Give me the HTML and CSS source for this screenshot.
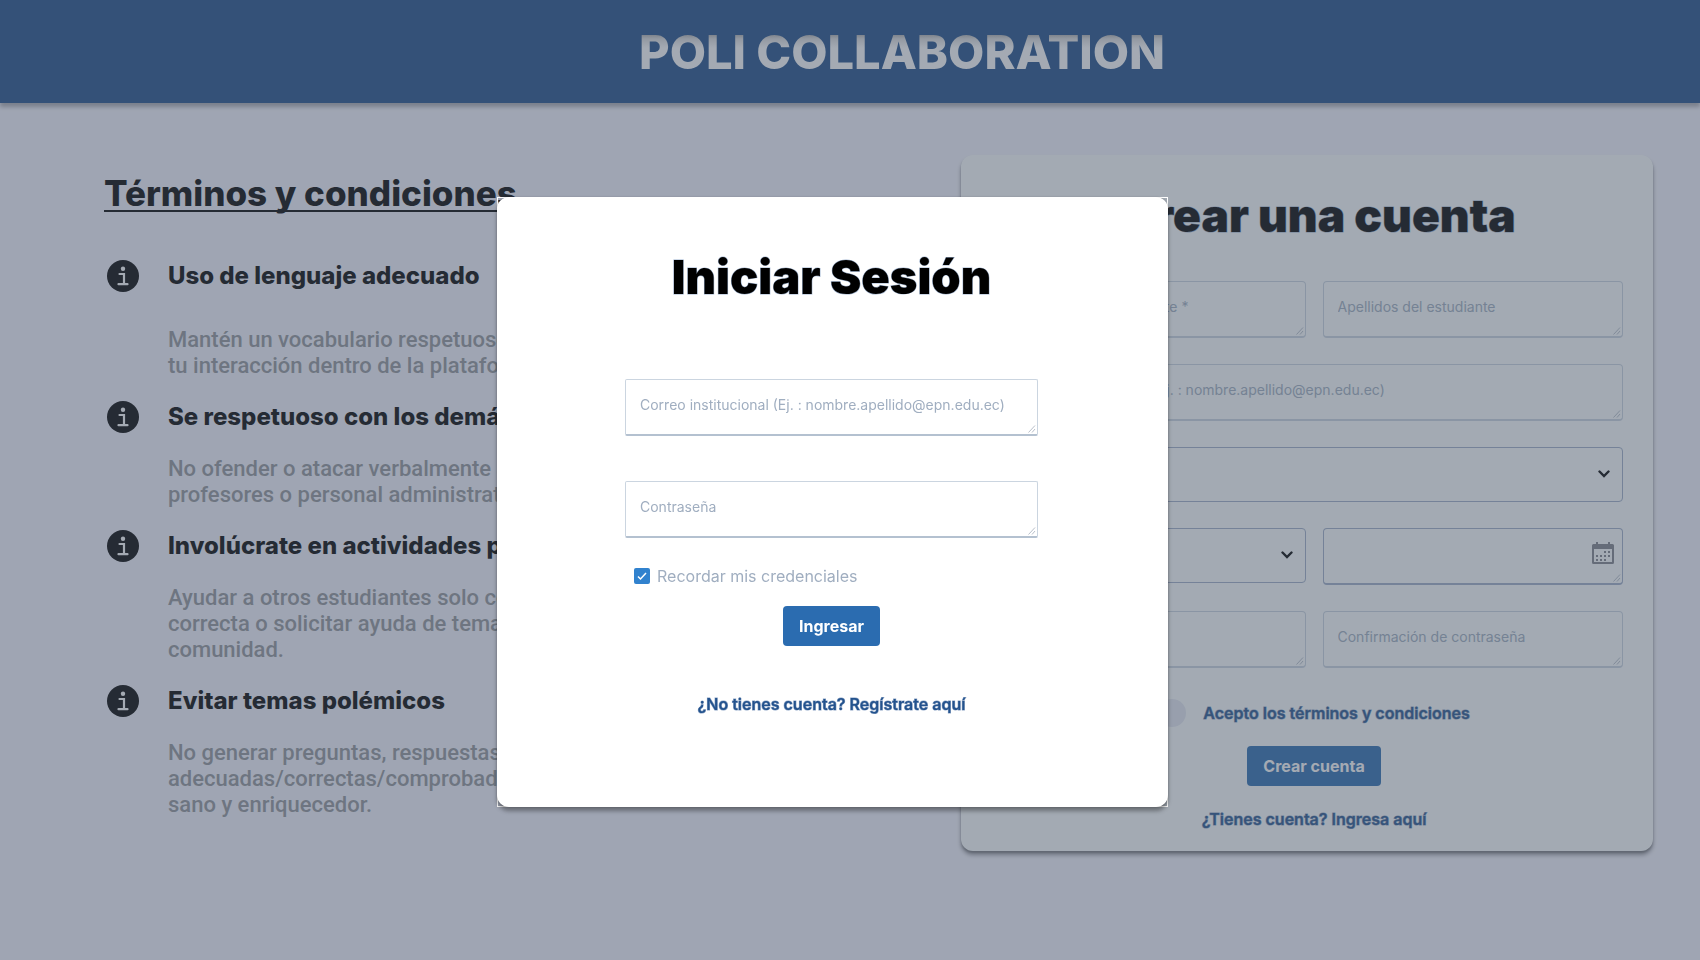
FILE: index.html
```html
<!DOCTYPE html>
<html lang="es">
<head>
<meta charset="utf-8">
<meta name="viewport" content="width=device-width, initial-scale=1">
<title>Poli Collaboration</title>
<link rel="stylesheet" href="styles.css">
</head>
<body>
<svg class="sprite" aria-hidden="true">
  <symbol id="info" viewBox="0 0 32 32">
    <circle cx="16" cy="16" r="16" fill="#000"/>
    <circle cx="16" cy="8.700" r="2.200" fill="#fff"/>
    <path d="M12.500 14h4.500v10M11.500 24.200h9" fill="none" stroke="#fff" stroke-width="2.200" stroke-linecap="round"/>
  </symbol>
  <symbol id="grip" viewBox="0 0 8 8">
    <path d="M.5 7.500l6.500-7M4 7.500l3-3.500" fill="none" stroke="currentColor" stroke-width="1"/>
  </symbol>
  <symbol id="chevron" viewBox="0 0 12 8">
    <path d="M1.500 1.500L6 6l4.500-4.500" fill="none" stroke="#000" stroke-width="2.400" stroke-linecap="round"/>
  </symbol>
  <symbol id="calendar" viewBox="0 0 22 22">
    <path d="M4 0h2v2h10V0h2v2h2.500q1.500 0 1.500 1.500V20.500q0 1.500-1.500 1.500H1.500Q0 22 0 20.500V3.500Q0 2 1.500 2H4zM2 7v13h18V7z" fill-rule="evenodd" fill="#80828a"/>
    <path d="M12 9h2v2h-2zM16 9h2v2h-2zM4 13h2v2H4zM8 13h2v2H8zM12 13h2v2h-2zM16 13h2v2h-2zM4 17h2v2H4zM8 17h2v2H8zM12 17h2v2h-2z" fill="#80828a"/>
  </symbol>
</svg>

<header class="topbar">
  <h1 class="brand">POLI COLLABORATION</h1>
</header>

<main class="page">
  <section class="terms">
    <h2 class="terms-title">Términos y condiciones</h2>
    <ul class="rules">
      <li class="rule rule-lead">
        <svg class="rule-icon"><use href="#info"/></svg>
        <h3 class="rule-name">Uso de lenguaje adecuado</h3>
        <p class="rule-text">Mantén un vocabulario respetuoso durante<br>tu interacción dentro de la plataforma.</p>
      </li>
      <li class="rule">
        <svg class="rule-icon"><use href="#info"/></svg>
        <h3 class="rule-name">Se respetuoso con los demás</h3>
        <p class="rule-text">No ofender o atacar verbalmente a otros,<br>profesores o personal administrativo.</p>
      </li>
      <li class="rule">
        <svg class="rule-icon"><use href="#info"/></svg>
        <h3 class="rule-name">Involúcrate en actividades positivas</h3>
        <p class="rule-text">Ayudar a otros estudiantes solo con información<br>correcta o solicitar ayuda de temas de la<br>comunidad.</p>
      </li>
      <li class="rule">
        <svg class="rule-icon"><use href="#info"/></svg>
        <h3 class="rule-name">Evitar temas polémicos</h3>
        <p class="rule-text">No generar preguntas, respuestas no<br>adecuadas/correctas/comprobadas en un espacio<br>sano y enriquecedor.</p>
      </li>
    </ul>
  </section>

  <form class="card signup" id="signup">
    <h2 class="card-title">Crear una cuenta</h2>
    <div class="signup-grid">
      <div class="field"><input class="control" type="text" placeholder="Nombres del estudiante *" aria-label="Nombres del estudiante"><svg class="grip"><use href="#grip"/></svg></div>
      <div class="field"><input class="control" type="text" placeholder="Apellidos del estudiante" aria-label="Apellidos del estudiante"><svg class="grip"><use href="#grip"/></svg></div>
      <div class="field wide"><input class="control" type="email" placeholder="Correo institucional (Ej. : nombre.apellido@epn.edu.ec)" aria-label="Correo institucional"><svg class="grip"><use href="#grip"/></svg></div>
      <div class="field wide strong"><select class="control select" aria-label="Carrera"><option></option></select><svg class="chevron"><use href="#chevron"/></svg></div>
      <div class="field strong"><select class="control select" aria-label="Género"><option></option></select><svg class="chevron"><use href="#chevron"/></svg></div>
      <div class="field strong"><input class="control" type="text" aria-label="Fecha de nacimiento"><svg class="calendar"><use href="#calendar"/></svg><svg class="grip"><use href="#grip"/></svg></div>
      <div class="field"><input class="control" type="password" placeholder="Contraseña" aria-label="Contraseña"><svg class="grip"><use href="#grip"/></svg></div>
      <div class="field"><input class="control" type="password" placeholder="Confirmación de contraseña" aria-label="Confirmación de contraseña"><svg class="grip"><use href="#grip"/></svg></div>
    </div>
    <div class="signup-actions">
      <label class="accept"><input class="toggle" type="checkbox"><span class="link">Acepto los términos y condiciones</span></label>
      <button class="button" type="button">Crear cuenta</button>
      <a class="link" href="#login">¿Tienes cuenta? Ingresa aquí</a>
    </div>
  </form>
</main>

<div class="overlay">
  <div class="modal" id="login" role="dialog" aria-modal="true" aria-labelledby="login-title">
    <form class="modal-body">
      <h2 class="modal-title" id="login-title">Iniciar Sesión</h2>
      <div class="modal-fields">
        <div class="field framed"><input class="control" type="email" placeholder="Correo institucional (Ej. : nombre.apellido@epn.edu.ec)" aria-label="Correo institucional"><svg class="grip"><use href="#grip"/></svg></div>
        <div class="field framed"><input class="control" type="password" placeholder="Contraseña" aria-label="Contraseña"><svg class="grip"><use href="#grip"/></svg></div>
      </div>
      <label class="remember">
        <span class="check"><input class="check-input" type="checkbox" checked><svg class="check-mark" viewBox="0 0 16 16"><path d="M4 8.500l2.500 2.500 5.500-6" fill="none" stroke="#fff" stroke-width="1.500"/></svg></span>
        Recordar mis credenciales
      </label>
      <button class="button" type="button">Ingresar</button>
      <a class="link modal-link" href="#signup">¿No tienes cuenta? Regístrate aquí</a>
    </form>
  </div>
</div>
</body>
</html>
```
FILE: styles.css
```css
* { box-sizing: border-box; }

body {
  margin: 0;
  min-height: 100vh;
  background: #f5f5fe;
  color: #000;
  font-family: Inter, "Liberation Sans", sans-serif;
}

h1, h2, h3, p, ul { margin: 0; padding: 0; }

.sprite { position: absolute; width: 0; height: 0; }

.topbar {
  display: flex;
  justify-content: center;
  padding: 20px 0 19px 104px;
  background: #1e4d88;
  box-shadow: 0 4px 4px rgba(0, 0, 0, 0.3);
}

.brand {
  background: linear-gradient(#aaa 14px, #ddd 19px, #fff 28px);
  -webkit-background-clip: text;
  background-clip: text;
  color: transparent;
  font: 800 47px/64px Inter, sans-serif;
}

.page {
  display: grid;
  grid-template-columns: minmax(0, 1fr) minmax(0, 692px);
  align-items: start;
  padding: 52px 47px 48px 104px;
}

.terms { padding-top: 14px; }

.terms-title {
  font: 800 35px/48px Inter, sans-serif;
  text-decoration: underline 2px;
  text-underline-offset: 4px;
  text-decoration-skip-ink: none;
}

.rules {
  display: grid;
  row-gap: 22px;
  margin-top: 43px;
  list-style: none;
}

.rule {
  display: grid;
  grid-template-columns: 32px minmax(0, 1fr);
  column-gap: 29px;
  row-gap: 23px;
  align-items: center;
  padding-left: 3px;
}

.rule-lead { row-gap: 35px; }

.rule-icon { width: 32px; height: 32px; }

.rule-name { font: 800 24px/32px Inter, sans-serif; }

.rule-text {
  grid-column: 2;
  color: #92959a;
  font: 500 22px/26px Roboto, sans-serif;
}

.card {
  border-radius: 12px;
  background: #fcffff;
  box-shadow: 0 4px 4px rgba(0, 0, 0, 0.4), 0 2px 2px rgba(0, 0, 0, 0.2);
}

.signup { padding: 28px 30px 20px 44px; }

.card-title {
  padding-left: 8px;
  font: 900 46px/64px Inter, sans-serif;
  text-align: center;
}

.card-title, .modal-title {
  -webkit-text-stroke: 1px #a0b4d0;
  paint-order: stroke fill;
}

.signup-grid {
  display: grid;
  grid-template-columns: 1fr 1fr;
  gap: 26px 17px;
  margin-top: 34px;
}

.field {
  display: flex;
  position: relative;
}

.wide { grid-column: 1 / -1; }

.control {
  flex: 1;
  min-width: 0;
  height: 57px;
  padding: 0 14px 5px;
  border: 1px solid #cbd5e0;
  border-bottom: 2px solid #cbd5e0;
  border-radius: 4px;
  background: transparent;
  color: #000;
  font: 400 14px/20px Inter, sans-serif;
}

.control::placeholder { color: #a0aec0; opacity: 1; }

.strong .control { border-color: #a0aec8; }

.strong .select {
  appearance: none;
  height: 55px;
  border-bottom-width: 1px;
}

.framed .control {
  border-radius: 2px;
  border-bottom-color: #b4c1d0;
}

.grip {
  position: absolute;
  right: 2px;
  bottom: 3px;
  width: 8px;
  height: 8px;
  color: #b8bfca;
}

.chevron {
  position: absolute;
  right: 13px;
  top: 23px;
  width: 12px;
  height: 8px;
}

.calendar {
  position: absolute;
  right: 9px;
  top: 14px;
  width: 22px;
  height: 22px;
}

.signup-actions {
  display: flex;
  flex-direction: column;
  align-items: center;
  margin-top: 31px;
}

.accept {
  display: flex;
  align-items: center;
  gap: 17px;
  margin-bottom: 19px;
}

.toggle {
  appearance: none;
  width: 28px;
  height: 28px;
  margin: 0;
  border-radius: 50%;
  background: #e6e9f2;
}

.button {
  height: 40px;
  padding: 0 16px;
  border: 0;
  border-radius: 4px;
  background: #2b6cb0;
  color: #fff;
  font: 700 16px/20px Inter, sans-serif;
}

.link {
  color: #23528d;
  font: 600 16px/24px Inter, sans-serif;
  text-decoration: none;
  -webkit-text-stroke: 1px #8fa6c6;
  paint-order: stroke fill;
}

.signup-actions > .link { margin-top: 21px; }

.overlay {
  position: fixed;
  inset: 0;
  display: flex;
  align-items: center;
  justify-content: center;
  padding: 43px 35px 0 0;
  background: rgba(74, 85, 104, 0.5);
}

.modal {
  width: 671px;
  max-width: 100%;
  border: 1px solid #fff;
}

.modal-body {
  display: flex;
  flex-direction: column;
  align-items: center;
  margin: -1px;
  padding: 48px 130px 91px 128px;
  border-radius: 12px;
  background: #fff;
  box-shadow: 0 4px 4px rgba(0, 0, 0, 0.35), 0 0 2px rgba(0, 0, 0, 0.2);
}

.modal-title { font: 900 47px/64px Inter, sans-serif; }

.modal-fields {
  display: grid;
  gap: 45px;
  width: 100%;
  margin-top: 70px;
}

.remember {
  display: flex;
  align-items: center;
  align-self: flex-start;
  gap: 7px;
  margin: 26px 0 18px 9px;
  color: #a0aec0;
  font: 400 16px/24px Inter, sans-serif;
}

.check { display: flex; position: relative; }

.check-input {
  appearance: none;
  width: 16px;
  height: 16px;
  margin: 0;
  border-radius: 2px;
  background: #3182ce;
}

.check-mark {
  position: absolute;
  inset: 0;
  width: 16px;
  height: 16px;
}

.modal-link { margin-top: 46px; }
```
